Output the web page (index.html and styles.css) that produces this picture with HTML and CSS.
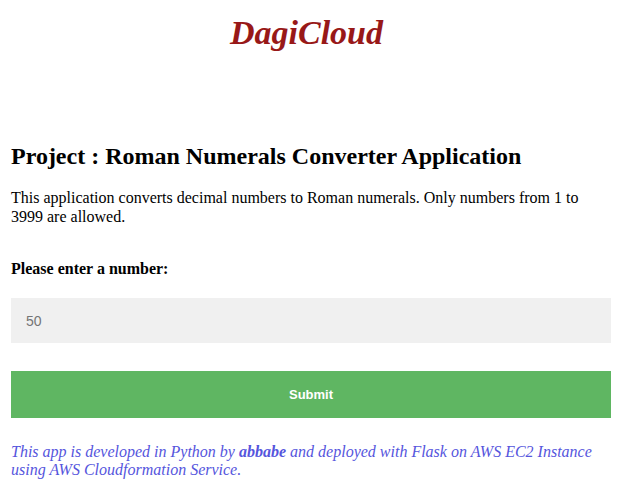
FILE: index.html
```html
<!DOCTYPE html>
<html>
<head>
<meta charset="utf-8">
<title>DagiCloud</title>
<link rel="stylesheet" href="styles.css">
</head>
<body>
<header class="brand">
  <h1 class="brand-title">DagiCloud</h1>
</header>
<main class="container">
  <h2 class="project-title">Project : Roman Numerals Converter Application</h2>
  <p class="intro">This application converts decimal numbers to Roman numerals. Only numbers from 1 to 3999 are allowed.</p>
  <form class="converter">
    <label class="field-label" for="number">Please enter a number:</label>
    <input class="number-input" id="number" type="text" placeholder="50">
    <button class="submit-btn" type="button">Submit</button>
  </form>
  <p class="footer-note">This app is developed in Python by <b>abbabe</b> and deployed with Flask on AWS EC2 Instance using AWS Cloudformation Service.</p>
</main>
</body>
</html>
```

FILE: styles.css
```css
html, body {
  margin: 0;
  padding: 0;
  background: #ffffff;
}
body {
  font-family: "Liberation Serif", "Times New Roman", serif;
  font-size: 16px;
  color: #000;
}
.brand {
  width: 613px;
  text-align: center;
  padding-top: 14px;
}
.brand-title {
  margin: 0;
  font-size: 34px;
  font-style: italic;
  font-weight: bold;
  color: #981818;
  line-height: 37px;
}
.container {
  width: 600px;
  margin-left: 11px;
  padding-top: 91px;
}
.project-title {
  margin: 0;
  font-size: 24px;
  font-weight: bold;
  line-height: 28px;
}
.intro {
  margin: 18px 0 0;
  line-height: 19px;
}
.converter {
  display: flex;
  flex-direction: column;
  margin-top: 33px;
}
.field-label {
  font-weight: bold;
  line-height: 19px;
}
.number-input {
  margin-top: 20px;
  height: 45px;
  box-sizing: border-box;
  border: none;
  background: #f0f0f0;
  padding: 0 15px;
  font-family: "Liberation Sans", Arial, sans-serif;
  font-size: 14px;
  color: #333;
  outline: none;
}
.number-input::placeholder {
  color: #757575;
}
.submit-btn {
  margin-top: 28px;
  height: 47px;
  border: none;
  background: #5fb662;
  color: #ffffff;
  font-family: "Liberation Sans", Arial, sans-serif;
  font-size: 13px;
  font-weight: bold;
  cursor: pointer;
}
.footer-note {
  margin: 25px 0 0;
  font-style: italic;
  color: #5555dd;
  line-height: 18px;
}
```
